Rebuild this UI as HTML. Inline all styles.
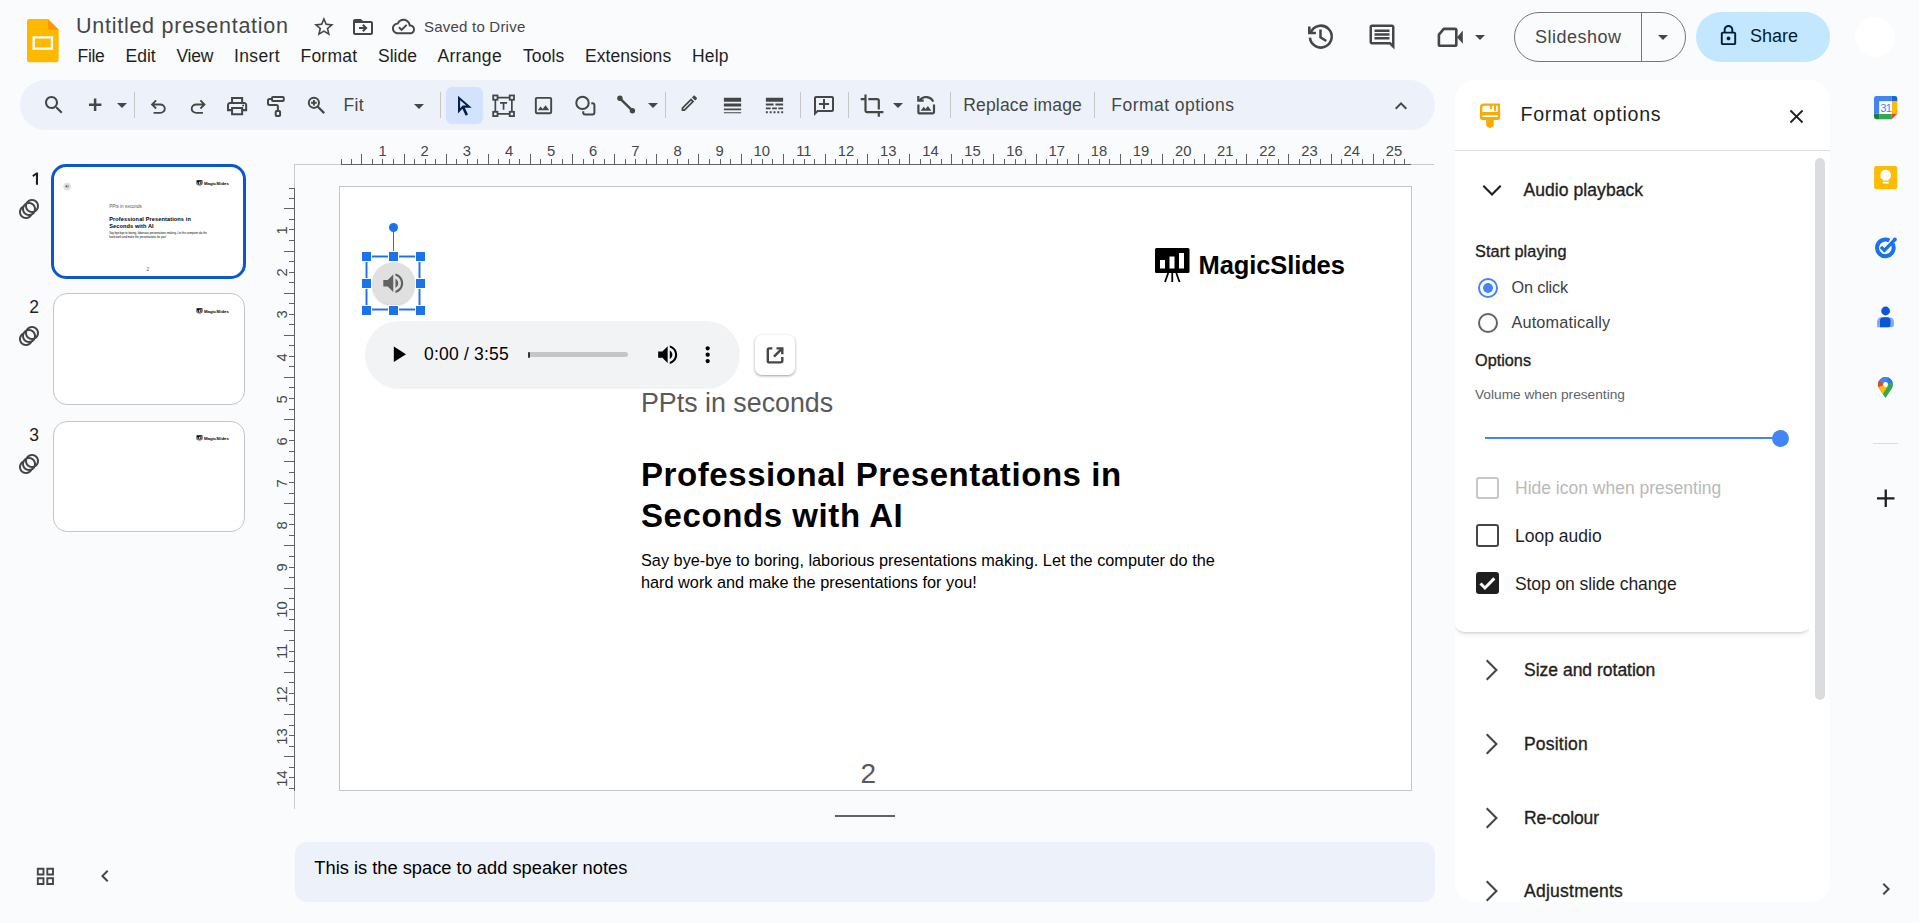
<!DOCTYPE html>
<html>
<head>
<meta charset="utf-8">
<title>Untitled presentation - Google Slides</title>
<style>
*{box-sizing:border-box;margin:0;padding:0}
html,body{width:1919px;height:923px;overflow:hidden;background:#f9fbfd;font-family:"Liberation Sans",sans-serif;color:#1f1f1f}
.a{position:absolute}
.t{position:absolute;white-space:nowrap;line-height:1}
svg{position:absolute;display:block;overflow:visible}
.ic{fill:#444746}
.nv{fill:#041e49}
#toolbar{left:20px;top:80px;width:1415px;height:50px;border-radius:25px;background:#edf2fa}
.sep{position:absolute;top:92px;width:1px;height:26px;background:#c7c7c7}
.menu{top:48.300px;font-size:17.5px;color:#1f1f1f}
#panel{left:1455px;top:80px;width:375px;height:822px;border-radius:20px;background:#fff;overflow:hidden}
#notes{left:295px;top:842px;width:1140px;height:60px;border-radius:12px;background:#edf2fa}
#slide{left:339px;top:186px;width:1073px;height:605px;background:#fff;border:1px solid #c4c7c5}
.thumb{position:absolute;background:#fff;border:1px solid #c4c7c5;border-radius:14px}
.rn{font-size:14.800px;color:#444746}
.med{-webkit-text-stroke:0.350px currentColor}
.sec{font-size:17.500px;color:#1f1f1f}
</style>
</head>
<body>
<!-- HEADER -->
<div id="header" class="a" style="left:0;top:0;width:1919px;height:76px">
<!-- slides logo -->
<svg style="left:26.900px;top:18.800px" width="31.700" height="43.200" viewBox="0 0 31.700 43.200">
<path d="M2.500 0H20.900L31.700 10.700V40.700a2.500 2.500 0 0 1-2.500 2.500H2.500a2.500 2.500 0 0 1-2.500-2.500V2.500a2.500 2.500 0 0 1 2.500-2.500z" fill="#ffb800"/>
<path d="M20.900 0L31.700 10.700H20.900z" fill="#ff9800"/>
<path d="M5.500 17.200H26.100V30.700H5.500zM7.900 19.400V28.500H23.800V19.400z" fill="#fff" fill-rule="evenodd"/>
</svg>
<div class="t" id="title" style="left:76px;top:16px;font-size:21.500px;letter-spacing:0.740px;color:#444746">Untitled presentation</div>
<svg class="ic" style="left:311.800px;top:15px" width="23.800" height="23.800" viewBox="0 0 24 24"><path d="M22 9.24l-7.19-.62L12 2 9.19 8.63 2 9.24l5.46 4.73L5.82 21 12 17.27 18.18 21l-1.63-7.03L22 9.24zM12 15.4l-3.76 2.27 1-4.28-3.32-2.88 4.38-.38L12 6.1l1.71 4.04 4.38.38-3.32 2.88 1 4.28L12 15.4z"/></svg>
<svg class="ic" style="left:351.200px;top:14.600px" width="24" height="24" viewBox="0 0 24 24"><path d="M20 6h-8l-2-2H4c-1.1 0-2 .9-2 2v12c0 1.1.9 2 2 2h16c1.1 0 2-.9 2-2V8c0-1.1-.9-2-2-2zm0 12H4V8h16v10zm-7.5-1l-1.4-1.4 1.6-1.6H8v-2h4.7l-1.6-1.6 1.4-1.4 4 4-4 4z"/></svg>
<svg class="ic" style="left:392.100px;top:15.200px" width="23" height="23" viewBox="0 0 24 24"><path d="M19.35 10.04C18.67 6.59 15.64 4 12 4 9.11 4 6.6 5.64 5.35 8.04 2.34 8.36 0 10.91 0 14c0 3.31 2.69 6 6 6h13c2.76 0 5-2.24 5-5 0-2.64-2.05-4.78-4.65-4.96zM19 18H6c-2.21 0-4-1.79-4-4 0-2.05 1.53-3.76 3.56-3.97l1.07-.11.5-.95C8.08 7.14 9.94 6 12 6c2.62 0 4.88 1.86 5.39 4.43l.3 1.5 1.53.11c1.56.1 2.78 1.41 2.78 2.96 0 1.65-1.35 3-3 3zm-9-3.82l-2.09-2.09L6.5 13.5 10 17l6.01-6.01-1.41-1.41z"/></svg>
<div class="t" id="saved" style="left:424px;top:19px;font-size:15px;letter-spacing:0.220px;color:#444746">Saved to Drive</div>
<div class="t menu" style="left:77.5px;letter-spacing:-0.3px">File</div>
<div class="t menu" style="left:125.5px;letter-spacing:0px">Edit</div>
<div class="t menu" style="left:176.5px;letter-spacing:-0.27px">View</div>
<div class="t menu" style="left:234px;letter-spacing:0.37px">Insert</div>
<div class="t menu" style="left:300.5px;letter-spacing:0.22px">Format</div>
<div class="t menu" style="left:378px;letter-spacing:0px">Slide</div>
<div class="t menu" style="left:437.5px;letter-spacing:0.31px">Arrange</div>
<div class="t menu" style="left:523px;letter-spacing:0.1px">Tools</div>
<div class="t menu" style="left:585px;letter-spacing:0.06px">Extensions</div>
<div class="t menu" style="left:692px;letter-spacing:0.18px">Help</div>
<!-- right controls -->
<svg style="left:1300px;top:16px" width="42" height="42" viewBox="1300 16 42 42"><g fill="none" stroke="#444746" stroke-width="2.600"><path d="M1310.700 32.500A10.900 10.900 0 1 1 1309.950 37.600"/><path d="M1309.300 26.500V33H1315.900"/><path d="M1320.500 29.600V37.400L1326.300 41" stroke-width="2.500"/></g></svg>
<svg class="ic" style="left:1367.300px;top:22.300px" width="30" height="30" viewBox="0 0 24 24"><path d="M21.99 4c0-1.1-.89-2-1.99-2H4c-1.1 0-2 .9-2 2v12c0 1.1.9 2 2 2h14l4 4-.01-18zM20 4v13.17L18.83 16H4V4h16zM6 12h12v2H6zm0-3h12v2H6zm0-3h12v2H6z"/></svg>
<svg style="left:1430px;top:16px" width="42" height="42" viewBox="1430 16 42 42"><path d="M1443.800 28.900H1455a1.300 1.300 0 0 1 1.300 1.300V44.500a1.300 1.300 0 0 1-1.300 1.300H1440.200a1.300 1.300 0 0 1-1.300-1.300V34.600Z" fill="none" stroke="#444746" stroke-width="2.600" stroke-linejoin="round"/><path d="M1457 37.200L1462.800 30.600V43.700Z" fill="#444746"/></svg>
<svg class="ic" style="left:1468.100px;top:24.500px" width="24" height="24" viewBox="0 0 24 24"><path d="M7 10l5 5 5-5z"/></svg>
<div class="a" style="left:1514px;top:12px;width:172px;height:50px;border:1px solid #747775;border-radius:25px"></div>
<div class="a" style="left:1641px;top:12px;width:1px;height:50px;background:#747775"></div>
<div class="t" style="left:1535px;top:27.800px;font-size:18px;letter-spacing:0.500px;color:#444746">Slideshow</div>
<svg class="ic" style="left:1651px;top:25px" width="24" height="24" viewBox="0 0 24 24"><path d="M7 10l5 5 5-5z"/></svg>
<div class="a" style="left:1696px;top:12px;width:134px;height:50px;border-radius:25px;background:#c2e7ff"></div>
<svg style="left:1716.500px;top:24px;fill:#001d35" width="23" height="23" viewBox="0 0 24 24"><path d="M18 8h-1V6c0-2.76-2.24-5-5-5S7 3.24 7 6v2H6c-1.1 0-2 .9-2 2v10c0 1.1.9 2 2 2h12c1.1 0 2-.9 2-2V10c0-1.1-.9-2-2-2zM9 6c0-1.66 1.34-3 3-3s3 1.34 3 3v2H9V6zm9 14H6V10h12v10zm-6-3c1.1 0 2-.9 2-2s-.9-2-2-2-2 .9-2 2 .9 2 2 2z"/></svg>
<div class="t" style="left:1750px;top:26.800px;font-size:18px;color:#001d35">Share</div>
<div class="a" style="left:1855px;top:17px;width:40px;height:40px;border-radius:50%;background:#fff"></div>
</div>
<!-- TOOLBAR -->
<div id="toolbar" class="a"></div>
<svg class="ic" style="left:41.5px;top:92.8px" width="24" height="24" viewBox="0 0 24 24" ><path d="M15.5 14h-.79l-.28-.27C15.41 12.59 16 11.11 16 9.5 16 5.91 13.09 3 9.5 3S3 5.91 3 9.5 5.91 16 9.5 16c1.61 0 3.09-.59 4.23-1.57l.27.28v.79l5 4.99L20.49 19l-4.99-5zm-6 0C7.01 14 5 11.99 5 9.5S7.01 5 9.5 5 14 7.01 14 9.5 11.99 14 9.5 14z"/></svg>
<svg style="left:80px;top:90px" width="30" height="30" viewBox="80 90 30 30"><path d="M89 104.800h12.400M95.100 98.500v12.500" stroke="#444746" stroke-width="2.500" fill="none"/></svg>
<svg class="ic" style="left:110.0px;top:93.2px" width="24" height="24" viewBox="0 0 24 24" ><path d="M7 10l5 5 5-5z"/></svg>
<div class="sep" style="left:134px"></div>
<svg class="ic" style="left:147.3px;top:95.8px" width="22.5" height="22.5" viewBox="0 0 24 24" ><path d="M7 19v-2h7.1q1.575 0 2.7375-1T18 13.5q0-1.5-1.1625-2.5T14.1 10H7.8l2.6 2.6L9 14 4 9l5-5 1.4 1.4L7.8 8h6.3q2.425 0 4.1625 1.575T20 13.5q0 2.35-1.7375 3.925T14.1 19H7z"/></svg>
<svg class="ic" style="left:186.9px;top:95.8px" width="22.5" height="22.5" viewBox="0 0 24 24" ><path transform="translate(24,0) scale(-1,1)" d="M7 19v-2h7.1q1.575 0 2.7375-1T18 13.5q0-1.5-1.1625-2.5T14.1 10H7.8l2.6 2.6L9 14 4 9l5-5 1.4 1.4L7.8 8h6.3q2.425 0 4.1625 1.575T20 13.5q0 2.35-1.7375 3.925T14.1 19H7z"/></svg>
<svg class="ic" style="left:225.2px;top:94.1px" width="24.2" height="24.2" viewBox="0 0 24 24" ><path d="M19 8h-1V3H6v5H5c-1.66 0-3 1.34-3 3v6h4v4h12v-4h4v-6c0-1.66-1.34-3-3-3zM8 5h8v3H8V5zm8 12v2H8v-4h8v2zm2-2v-2H6v2H4v-4c0-.55.45-1 1-1h14c.55 0 1 .45 1 1v4h-2z"/><circle cx="18" cy="11.5" r="1"/></svg>
<svg style="left:256px;top:88px" width="80" height="36" viewBox="256 88 80 36"><g fill="none" stroke="#444746" stroke-width="2" stroke-linejoin="round"><rect x="272" y="96.900" width="11.750" height="4.200" rx="1"/><path d="M272 99H269.500a1.500 1.500 0 0 0-1.500 1.500V103.400a1.500 1.500 0 0 0 1.500 1.500H276.400a1.500 1.500 0 0 1 1.500 1.500V110.500"/><rect x="275.700" y="111" width="4.400" height="5" rx="1"/></g></svg>
<svg style="left:300px;top:88px" width="36" height="36" viewBox="300 88 36 36"><g fill="none" stroke="#444746"><circle cx="313.900" cy="102.800" r="5.100" stroke-width="2"/><path d="M317.600 106.500L324.200 113.100" stroke-width="2.200"/><path d="M311.100 102.800h5.600M313.900 100v5.600" stroke-width="1.900"/></g></svg>
<div class="t" style="left:343.500px;top:97.300px;font-size:17.500px;letter-spacing:0.300px;color:#444746">Fit</div>
<svg class="ic" style="left:406.5px;top:93.5px" width="24" height="24" viewBox="0 0 24 24" ><path d="M7 10l5 5 5-5z"/></svg>
<div class="sep" style="left:440px"></div>
<div class="a" style="left:446px;top:87px;width:37px;height:37px;border-radius:6px;background:#d3e3fd"></div>
<svg style="left:440px;top:84px" width="90" height="42" viewBox="440 84 90 42"><path fill="#041e49" fill-rule="evenodd" d="M458 95.700V113.400L462.400 108.700 465.700 115.700 468 114.600 464.800 107.700H471.700ZM460.100 100.300V108.200L462.700 105.600H466.300Z"/></svg>
<svg style="left:488px;top:90px" width="32" height="32" viewBox="488 90 32 32"><g fill="none" stroke="#444746" stroke-width="1.800"><rect x="493.200" y="95.450" width="4.300" height="4.300"/><rect x="509.700" y="95.450" width="4.300" height="4.300"/><rect x="493.200" y="111.800" width="4.300" height="4.300"/><rect x="509.700" y="111.800" width="4.300" height="4.300"/><path d="M497.500 97.600h12.200M497.500 113.950h12.200M495.350 99.750v12.050M511.850 99.750v12.050" stroke-width="1.700"/></g><path fill="#444746" d="M500 102.100h7.100v1.700h-2.700v5.900h-1.700v-5.900H500z"/></svg>
<svg class="ic" style="left:532.0px;top:94.2px" width="23" height="23" viewBox="0 0 24 24" ><path d="M19 5v14H5V5h14m0-2H5c-1.1 0-2 .9-2 2v14c0 1.1.9 2 2 2h14c1.1 0 2-.9 2-2V5c0-1.1-.9-2-2-2zm-4.86 8.86l-3 3.87L9 13.14 6 17h12l-3.86-5.14z"/></svg>
<svg style="left:570px;top:90px" width="32" height="32" viewBox="570 90 32 32"><g fill="none" stroke="#444746" stroke-width="2"><circle cx="582.500" cy="102.900" r="6.200"/><path d="M591.300 103.300H592.400a2 2 0 0 1 2 2V112.400a2 2 0 0 1-2 2H585.200a2 2 0 0 1-2-2V111.200"/></g></svg>
<svg style="left:612px;top:90px" width="30" height="30" viewBox="612 90 30 30"><path d="M619.900 98.300L632.400 110.700" stroke="#444746" stroke-width="2.400" fill="none"/><circle cx="619.900" cy="98.300" r="2.700" fill="#444746"/><circle cx="632.400" cy="110.700" r="2.700" fill="#444746"/></svg>
<svg class="ic" style="left:641.0px;top:93.2px" width="24" height="24" viewBox="0 0 24 24" ><path d="M7 10l5 5 5-5z"/></svg>
<div class="sep" style="left:665px"></div>
<svg class="ic" style="left:679.4px;top:93.3px" width="20.6" height="20.6" viewBox="0 0 24 24" ><path d="M14.06 9.02l.92.92L5.92 19H5v-.92l9.06-9.06M17.66 3c-.25 0-.51.1-.7.29l-1.83 1.83 3.75 3.75 1.83-1.83c.39-.39.39-1.02 0-1.41l-2.34-2.34c-.2-.2-.45-.29-.71-.29zm-3.6 3.19L3 17.25V21h3.75L17.810 9.94l-3.75-3.75z"/></svg>
<svg class="ic" style="left:720.6px;top:94.1px" width="23" height="23" viewBox="0 0 24 24" ><path d="M3 17h18v-2H3v2zm0 3h18v-1H3v1zm0-7h18v-3H3v3zm0-9v4h18V4H3z"/></svg>
<svg class="ic" style="left:762.6px;top:94.1px" width="23" height="23" viewBox="0 0 24 24" ><path d="M3 16h5v-2H3v2zm6.500 0h5v-2h-5v2zm6.500 0h5v-2h-5v2zM3 20h2v-2H3v2zm4 0h2v-2H7v2zm4 0h2v-2h-2v2zm4 0h2v-2h-2v2zm4 0h2v-2h-2v2zM3 12h8v-2H3v2zm10 0h8v-2h-8v2zM3 4v4h18V4H3z"/></svg>
<div class="sep" style="left:800px"></div>
<svg class="ic" style="left:812.0px;top:93.5px" width="24" height="24" viewBox="0 0 24 24" ><path transform="translate(24,0) scale(-1,1)" d="M22 4c0-1.100-.9-2-2-2H4c-1.100 0-2 .9-2 2v12c0 1.100.9 2 2 2h14l4 4V4zm-2 13.170L18.830 16H4V4h16v13.170zM13 5h-2v4H7v2h4v4h2v-4h4V9h-4z"/></svg>
<div class="sep" style="left:848px"></div>
<svg style="left:856px;top:90px" width="32" height="32" viewBox="856 90 32 32"><g fill="none" stroke="#444746" stroke-width="2.200"><path d="M860.700 99.100H865.500M865.500 94.400V110.600a1.500 1.500 0 0 0 1.500 1.500H883.400M868.300 99.100H877.300a1.500 1.500 0 0 1 1.500 1.500V109.500M878.800 112.100V116.800"/></g></svg>
<svg class="ic" style="left:886.0px;top:93.2px" width="24" height="24" viewBox="0 0 24 24" ><path d="M7 10l5 5 5-5z"/></svg>
<svg style="left:910px;top:90px" width="32" height="32" viewBox="910 90 32 32"><g fill="none" stroke="#444746" stroke-width="2.200"><path d="M918.400 104.600V111.900a1.500 1.500 0 0 0 1.500 1.500H932.500a1.500 1.500 0 0 0 1.500-1.500V104.600"/><path d="M918.300 96V100.700H923.700"/><path d="M919.800 100.200A7.800 7.800 0 0 1 933.200 101.600"/></g><path fill="#444746" d="M920.600 110.800l3.200-4 1.800 2.200 2.300-2.900 3.500 4.700z"/></svg>
<div class="sep" style="left:950px"></div>
<div class="t" style="left:963.300px;top:97.200px;font-size:17.500px;letter-spacing:0.150px;color:#444746">Replace image</div>
<div class="sep" style="left:1094px"></div>
<div class="t" style="left:1111.300px;top:97.100px;font-size:17.500px;letter-spacing:0.460px;color:#444746">Format options</div>
<svg class="ic" style="left:1389.0px;top:93.5px" width="24" height="24" viewBox="0 0 24 24" ><path d="M12 8l-6 6 1.410 1.410L12 10.830l4.590 4.580L18 14z"/></svg>
<!-- FILMSTRIP -->
<div id="film" class="a" style="left:0;top:0;width:290px;height:840px">
<div class="a" style="left:51px;top:163.500px;width:195px;height:115px;border:3px solid #0b57d0;border-radius:15px;background:#fff"></div>
<div class="thumb" style="left:53px;top:293px;width:191.500px;height:111.500px"></div>
<div class="thumb" style="left:53px;top:420.500px;width:191.500px;height:111.500px"></div>
<svg style="left:28px;top:168px" width="14" height="20" viewBox="28 168 14 20"><path d="M38 172.500V184.800H35.900V175.100L33.300 176.900 32.300 175.200 36.400 172.500Z" fill="#1f1f1f"/></svg>
<svg class="ic" style="left:16.900px;top:196.9px" width="24" height="24" viewBox="0 0 24 24"><path d="M15 2c-2.710 0-5.050 1.540-6.220 3.780-1.280.670-2.340 1.720-3 3C3.540 9.950 2 12.290 2 15c0 3.870 3.130 7 7 7 2.710 0 5.050-1.540 6.220-3.780 1.280-.670 2.340-1.720 3-3C20.460 14.050 22 11.710 22 9c0-3.870-3.130-7-7-7zM9 20c-2.760 0-5-2.240-5-5 0-1.120.370-2.160 1-3 0 3.870 3.130 7 7 7-.840.630-1.880 1-3 1zm3-3c-2.760 0-5-2.240-5-5 0-1.120.370-2.160 1-3 0 3.860 3.130 6.990 7 7-.840.630-1.880 1-3 1zm4.700-3.300c-.530.190-1.100.300-1.700.300-2.760 0-5-2.240-5-5 0-.600.110-1.170.300-1.700.530-.190 1.100-.300 1.700-.300 2.760 0 5 2.240 5 5 0 .600-.110 1.170-.300 1.700zM19 12c0-3.860-3.130-6.990-7-7 .840-.630 1.870-1 3-1 2.760 0 5 2.240 5 5 0 1.120-.370 2.160-1 3z"/></svg>
<div class="t" style="left:19px;top:298.700px;width:20px;text-align:right;font-size:17.500px;color:#1f1f1f">2</div>
<svg class="ic" style="left:16.900px;top:323.9px" width="24" height="24" viewBox="0 0 24 24"><path d="M15 2c-2.710 0-5.050 1.540-6.220 3.780-1.280.670-2.340 1.720-3 3C3.540 9.950 2 12.290 2 15c0 3.870 3.130 7 7 7 2.710 0 5.050-1.540 6.220-3.780 1.280-.670 2.340-1.720 3-3C20.460 14.050 22 11.710 22 9c0-3.870-3.130-7-7-7zM9 20c-2.760 0-5-2.240-5-5 0-1.120.370-2.160 1-3 0 3.870 3.130 7 7 7-.840.630-1.880 1-3 1zm3-3c-2.760 0-5-2.240-5-5 0-1.120.370-2.160 1-3 0 3.860 3.130 6.990 7 7-.840.630-1.880 1-3 1zm4.700-3.300c-.530.190-1.100.300-1.700.300-2.760 0-5-2.240-5-5 0-.600.110-1.170.300-1.700.530-.190 1.100-.300 1.700-.300 2.760 0 5 2.240 5 5 0 .600-.110 1.170-.300 1.700zM19 12c0-3.860-3.130-6.990-7-7 .840-.630 1.870-1 3-1 2.760 0 5 2.240 5 5 0 1.120-.370 2.160-1 3z"/></svg>
<div class="t" style="left:19px;top:426.500px;width:20px;text-align:right;font-size:17.500px;color:#1f1f1f">3</div>
<svg class="ic" style="left:16.900px;top:451.9px" width="24" height="24" viewBox="0 0 24 24"><path d="M15 2c-2.710 0-5.050 1.540-6.220 3.780-1.280.670-2.340 1.720-3 3C3.540 9.950 2 12.290 2 15c0 3.870 3.130 7 7 7 2.710 0 5.050-1.540 6.220-3.780 1.280-.670 2.340-1.720 3-3C20.460 14.050 22 11.710 22 9c0-3.870-3.130-7-7-7zM9 20c-2.760 0-5-2.240-5-5 0-1.120.370-2.160 1-3 0 3.870 3.130 7 7 7-.840.630-1.880 1-3 1zm3-3c-2.760 0-5-2.240-5-5 0-1.120.370-2.160 1-3 0 3.860 3.130 6.990 7 7-.840.630-1.880 1-3 1zm4.700-3.300c-.530.190-1.100.300-1.700.300-2.760 0-5-2.240-5-5 0-.600.110-1.170.300-1.700.530-.190 1.100-.300 1.700-.300 2.760 0 5 2.240 5 5 0 .600-.110 1.170-.300 1.700zM19 12c0-3.860-3.130-6.990-7-7 .840-.630 1.870-1 3-1 2.760 0 5 2.240 5 5 0 1.120-.370 2.160-1 3z"/></svg>
<div class="a" style="left:57.700px;top:170px;width:1071px;height:603px;transform:scale(0.17);transform-origin:0 0"><svg style="left:814.5px;top:60.5px" width="34.5" height="34.5" viewBox="0 0 34.5 34.5"><rect x="0" y="0" width="34.500" height="25" rx="1.500" fill="#000"/><rect x="5" y="12" width="5" height="8.500" fill="#fff"/><rect x="14.500" y="8.500" width="5" height="12" fill="#fff"/><rect x="24" y="5" width="5" height="15.500" fill="#fff"/><path d="M13.200 25L10 34M17.250 25v9M21.300 25L24.500 34" stroke="#000" stroke-width="1.800" fill="none"/></svg><div class="t" style="left:858.500px;top:66px;font-size:25.500px;font-weight:bold;color:#000;letter-spacing:-0.100px">MagicSlides</div><div class="t" style="left:301px;top:202.800px;font-size:26.800px;color:#595959">PPts in seconds</div><div class="t" style="left:301px;top:266.800px;font-size:33px;letter-spacing:0.580px;font-weight:bold;color:#000;line-height:41.600px">Professional Presentations in<br>Seconds with AI</div><div class="t" style="left:301px;top:361.500px;font-size:16.300px;color:#000;line-height:22.6px">Say bye-bye to boring, laborious presentations making. Let the computer do the<br>hard work and make the presentations for you!</div><div class="t" style="left:520.5px;top:573.3px;font-size:28px;color:#595959">2</div><div class="a" style="left:32px;top:75px;width:43px;height:43px;border-radius:50%;background:#e0e0e0;box-shadow:0 1.500px 2px rgba(0,0,0,.18)"></div><svg style="left:40.200px;top:83.200px;fill:#616161" width="26.500" height="26.500" viewBox="0 0 24 24"><path d="M3 9v6h4l5 5V4L7 9H3zm13.500 3c0-1.770-1.020-3.290-2.500-4.030v8.050c1.480-.730 2.500-2.250 2.500-4.020zM14 3.230v2.060c2.890.860 5 3.540 5 6.710s-2.110 5.850-5 6.710v2.060c4.010-.910 7-4.490 7-8.770s-2.990-7.860-7-8.770z"/></svg></div>
<div class="a" style="left:57.700px;top:297.700px;width:1071px;height:603px;transform:scale(0.17);transform-origin:0 0"><svg style="left:814.5px;top:60.5px" width="34.5" height="34.5" viewBox="0 0 34.5 34.5"><rect x="0" y="0" width="34.500" height="25" rx="1.500" fill="#000"/><rect x="5" y="12" width="5" height="8.500" fill="#fff"/><rect x="14.500" y="8.500" width="5" height="12" fill="#fff"/><rect x="24" y="5" width="5" height="15.500" fill="#fff"/><path d="M13.200 25L10 34M17.250 25v9M21.300 25L24.500 34" stroke="#000" stroke-width="1.800" fill="none"/></svg><div class="t" style="left:858.500px;top:66px;font-size:25.500px;font-weight:bold;color:#000;letter-spacing:-0.100px">MagicSlides</div></div>
<div class="a" style="left:57.700px;top:425.100px;width:1071px;height:603px;transform:scale(0.17);transform-origin:0 0"><svg style="left:814.5px;top:60.5px" width="34.5" height="34.5" viewBox="0 0 34.5 34.5"><rect x="0" y="0" width="34.500" height="25" rx="1.500" fill="#000"/><rect x="5" y="12" width="5" height="8.500" fill="#fff"/><rect x="14.500" y="8.500" width="5" height="12" fill="#fff"/><rect x="24" y="5" width="5" height="15.500" fill="#fff"/><path d="M13.200 25L10 34M17.250 25v9M21.300 25L24.500 34" stroke="#000" stroke-width="1.800" fill="none"/></svg><div class="t" style="left:858.500px;top:66px;font-size:25.500px;font-weight:bold;color:#000;letter-spacing:-0.100px">MagicSlides</div></div>
</div>
<!-- RULERS -->
<div class="a" style="left:294px;top:164px;width:1140px;height:1px;background:#c9cbcd"></div>
<div class="a" style="left:341px;top:164px;width:1070px;height:1px;background:#5f6368"></div>
<div class="a" style="left:294px;top:164px;width:1px;height:645px;background:#c9cbcd"></div>
<div class="a" style="left:294px;top:188px;width:1px;height:603px;background:#5f6368"></div>
<svg style="left:0;top:0;fill:#5f6368" width="1919" height="923" viewBox="0 0 1919 923" shape-rendering="crispEdges"><rect x="341" y="159" width="1" height="5"/><rect x="351" y="159" width="1" height="5"/><rect x="361" y="154" width="1" height="10"/><rect x="372" y="159" width="1" height="5"/><rect x="382" y="159" width="1" height="5"/><rect x="393" y="159" width="1" height="5"/><rect x="404" y="154" width="1" height="10"/><rect x="414" y="159" width="1" height="5"/><rect x="425" y="159" width="1" height="5"/><rect x="435" y="159" width="1" height="5"/><rect x="446" y="154" width="1" height="10"/><rect x="456" y="159" width="1" height="5"/><rect x="467" y="159" width="1" height="5"/><rect x="477" y="159" width="1" height="5"/><rect x="488" y="154" width="1" height="10"/><rect x="498" y="159" width="1" height="5"/><rect x="509" y="159" width="1" height="5"/><rect x="519" y="159" width="1" height="5"/><rect x="530" y="154" width="1" height="10"/><rect x="540" y="159" width="1" height="5"/><rect x="551" y="159" width="1" height="5"/><rect x="562" y="159" width="1" height="5"/><rect x="572" y="154" width="1" height="10"/><rect x="583" y="159" width="1" height="5"/><rect x="593" y="159" width="1" height="5"/><rect x="604" y="159" width="1" height="5"/><rect x="614" y="154" width="1" height="10"/><rect x="625" y="159" width="1" height="5"/><rect x="635" y="159" width="1" height="5"/><rect x="646" y="159" width="1" height="5"/><rect x="656" y="154" width="1" height="10"/><rect x="667" y="159" width="1" height="5"/><rect x="677" y="159" width="1" height="5"/><rect x="688" y="159" width="1" height="5"/><rect x="698" y="154" width="1" height="10"/><rect x="709" y="159" width="1" height="5"/><rect x="720" y="159" width="1" height="5"/><rect x="730" y="159" width="1" height="5"/><rect x="741" y="154" width="1" height="10"/><rect x="751" y="159" width="1" height="5"/><rect x="762" y="159" width="1" height="5"/><rect x="772" y="159" width="1" height="5"/><rect x="783" y="154" width="1" height="10"/><rect x="793" y="159" width="1" height="5"/><rect x="804" y="159" width="1" height="5"/><rect x="814" y="159" width="1" height="5"/><rect x="825" y="154" width="1" height="10"/><rect x="835" y="159" width="1" height="5"/><rect x="846" y="159" width="1" height="5"/><rect x="857" y="159" width="1" height="5"/><rect x="867" y="154" width="1" height="10"/><rect x="878" y="159" width="1" height="5"/><rect x="888" y="159" width="1" height="5"/><rect x="899" y="159" width="1" height="5"/><rect x="909" y="154" width="1" height="10"/><rect x="920" y="159" width="1" height="5"/><rect x="930" y="159" width="1" height="5"/><rect x="941" y="159" width="1" height="5"/><rect x="951" y="154" width="1" height="10"/><rect x="962" y="159" width="1" height="5"/><rect x="972" y="159" width="1" height="5"/><rect x="983" y="159" width="1" height="5"/><rect x="993" y="154" width="1" height="10"/><rect x="1004" y="159" width="1" height="5"/><rect x="1015" y="159" width="1" height="5"/><rect x="1025" y="159" width="1" height="5"/><rect x="1036" y="154" width="1" height="10"/><rect x="1046" y="159" width="1" height="5"/><rect x="1057" y="159" width="1" height="5"/><rect x="1067" y="159" width="1" height="5"/><rect x="1078" y="154" width="1" height="10"/><rect x="1088" y="159" width="1" height="5"/><rect x="1099" y="159" width="1" height="5"/><rect x="1109" y="159" width="1" height="5"/><rect x="1120" y="154" width="1" height="10"/><rect x="1130" y="159" width="1" height="5"/><rect x="1141" y="159" width="1" height="5"/><rect x="1151" y="159" width="1" height="5"/><rect x="1162" y="154" width="1" height="10"/><rect x="1173" y="159" width="1" height="5"/><rect x="1183" y="159" width="1" height="5"/><rect x="1194" y="159" width="1" height="5"/><rect x="1204" y="154" width="1" height="10"/><rect x="1215" y="159" width="1" height="5"/><rect x="1225" y="159" width="1" height="5"/><rect x="1236" y="159" width="1" height="5"/><rect x="1246" y="154" width="1" height="10"/><rect x="1257" y="159" width="1" height="5"/><rect x="1267" y="159" width="1" height="5"/><rect x="1278" y="159" width="1" height="5"/><rect x="1288" y="154" width="1" height="10"/><rect x="1299" y="159" width="1" height="5"/><rect x="1310" y="159" width="1" height="5"/><rect x="1320" y="159" width="1" height="5"/><rect x="1331" y="154" width="1" height="10"/><rect x="1341" y="159" width="1" height="5"/><rect x="1352" y="159" width="1" height="5"/><rect x="1362" y="159" width="1" height="5"/><rect x="1373" y="154" width="1" height="10"/><rect x="1383" y="159" width="1" height="5"/><rect x="1394" y="159" width="1" height="5"/><rect x="1404" y="159" width="1" height="5"/><rect x="289" y="188" width="5" height="1"/><rect x="289" y="198" width="5" height="1"/><rect x="284" y="208" width="10" height="1"/><rect x="289" y="219" width="5" height="1"/><rect x="289" y="229" width="5" height="1"/><rect x="289" y="240" width="5" height="1"/><rect x="284" y="251" width="10" height="1"/><rect x="289" y="261" width="5" height="1"/><rect x="289" y="272" width="5" height="1"/><rect x="289" y="282" width="5" height="1"/><rect x="284" y="293" width="10" height="1"/><rect x="289" y="303" width="5" height="1"/><rect x="289" y="314" width="5" height="1"/><rect x="289" y="324" width="5" height="1"/><rect x="284" y="335" width="10" height="1"/><rect x="289" y="345" width="5" height="1"/><rect x="289" y="356" width="5" height="1"/><rect x="289" y="366" width="5" height="1"/><rect x="284" y="377" width="10" height="1"/><rect x="289" y="387" width="5" height="1"/><rect x="289" y="398" width="5" height="1"/><rect x="289" y="409" width="5" height="1"/><rect x="284" y="419" width="10" height="1"/><rect x="289" y="430" width="5" height="1"/><rect x="289" y="440" width="5" height="1"/><rect x="289" y="451" width="5" height="1"/><rect x="284" y="461" width="10" height="1"/><rect x="289" y="472" width="5" height="1"/><rect x="289" y="482" width="5" height="1"/><rect x="289" y="493" width="5" height="1"/><rect x="284" y="503" width="10" height="1"/><rect x="289" y="514" width="5" height="1"/><rect x="289" y="524" width="5" height="1"/><rect x="289" y="535" width="5" height="1"/><rect x="284" y="545" width="10" height="1"/><rect x="289" y="556" width="5" height="1"/><rect x="289" y="567" width="5" height="1"/><rect x="289" y="577" width="5" height="1"/><rect x="284" y="588" width="10" height="1"/><rect x="289" y="598" width="5" height="1"/><rect x="289" y="609" width="5" height="1"/><rect x="289" y="619" width="5" height="1"/><rect x="284" y="630" width="10" height="1"/><rect x="289" y="640" width="5" height="1"/><rect x="289" y="651" width="5" height="1"/><rect x="289" y="661" width="5" height="1"/><rect x="284" y="672" width="10" height="1"/><rect x="289" y="682" width="5" height="1"/><rect x="289" y="693" width="5" height="1"/><rect x="289" y="704" width="5" height="1"/><rect x="284" y="714" width="10" height="1"/><rect x="289" y="725" width="5" height="1"/><rect x="289" y="735" width="5" height="1"/><rect x="289" y="746" width="5" height="1"/><rect x="284" y="756" width="10" height="1"/><rect x="289" y="767" width="5" height="1"/><rect x="289" y="777" width="5" height="1"/><rect x="289" y="788" width="5" height="1"/></svg>
<div class="t rn" style="left:362.5px;top:144.300px;width:40px;text-align:center">1</div>
<div class="t rn" style="left:404.7px;top:144.300px;width:40px;text-align:center">2</div>
<div class="t rn" style="left:446.8px;top:144.300px;width:40px;text-align:center">3</div>
<div class="t rn" style="left:489.0px;top:144.300px;width:40px;text-align:center">4</div>
<div class="t rn" style="left:531.1px;top:144.300px;width:40px;text-align:center">5</div>
<div class="t rn" style="left:573.2px;top:144.300px;width:40px;text-align:center">6</div>
<div class="t rn" style="left:615.4px;top:144.300px;width:40px;text-align:center">7</div>
<div class="t rn" style="left:657.5px;top:144.300px;width:40px;text-align:center">8</div>
<div class="t rn" style="left:699.7px;top:144.300px;width:40px;text-align:center">9</div>
<div class="t rn" style="left:741.8px;top:144.300px;width:40px;text-align:center">10</div>
<div class="t rn" style="left:783.9px;top:144.300px;width:40px;text-align:center">11</div>
<div class="t rn" style="left:826.1px;top:144.300px;width:40px;text-align:center">12</div>
<div class="t rn" style="left:868.2px;top:144.300px;width:40px;text-align:center">13</div>
<div class="t rn" style="left:910.4px;top:144.300px;width:40px;text-align:center">14</div>
<div class="t rn" style="left:952.5px;top:144.300px;width:40px;text-align:center">15</div>
<div class="t rn" style="left:994.6px;top:144.300px;width:40px;text-align:center">16</div>
<div class="t rn" style="left:1036.8px;top:144.300px;width:40px;text-align:center">17</div>
<div class="t rn" style="left:1078.9px;top:144.300px;width:40px;text-align:center">18</div>
<div class="t rn" style="left:1121.1px;top:144.300px;width:40px;text-align:center">19</div>
<div class="t rn" style="left:1163.2px;top:144.300px;width:40px;text-align:center">20</div>
<div class="t rn" style="left:1205.3px;top:144.300px;width:40px;text-align:center">21</div>
<div class="t rn" style="left:1247.5px;top:144.300px;width:40px;text-align:center">22</div>
<div class="t rn" style="left:1289.6px;top:144.300px;width:40px;text-align:center">23</div>
<div class="t rn" style="left:1331.8px;top:144.300px;width:40px;text-align:center">24</div>
<div class="t rn" style="left:1373.9px;top:144.300px;width:40px;text-align:center">25</div>
<div class="t rn" style="left:262.2px;top:223.0px;width:40px;text-align:center;transform:rotate(-90deg)">1</div>
<div class="t rn" style="left:262.2px;top:265.2px;width:40px;text-align:center;transform:rotate(-90deg)">2</div>
<div class="t rn" style="left:262.2px;top:307.3px;width:40px;text-align:center;transform:rotate(-90deg)">3</div>
<div class="t rn" style="left:262.2px;top:349.5px;width:40px;text-align:center;transform:rotate(-90deg)">4</div>
<div class="t rn" style="left:262.2px;top:391.6px;width:40px;text-align:center;transform:rotate(-90deg)">5</div>
<div class="t rn" style="left:262.2px;top:433.7px;width:40px;text-align:center;transform:rotate(-90deg)">6</div>
<div class="t rn" style="left:262.2px;top:475.9px;width:40px;text-align:center;transform:rotate(-90deg)">7</div>
<div class="t rn" style="left:262.2px;top:518.0px;width:40px;text-align:center;transform:rotate(-90deg)">8</div>
<div class="t rn" style="left:262.2px;top:560.2px;width:40px;text-align:center;transform:rotate(-90deg)">9</div>
<div class="t rn" style="left:262.2px;top:602.3px;width:40px;text-align:center;transform:rotate(-90deg)">10</div>
<div class="t rn" style="left:262.2px;top:644.4px;width:40px;text-align:center;transform:rotate(-90deg)">11</div>
<div class="t rn" style="left:262.2px;top:686.6px;width:40px;text-align:center;transform:rotate(-90deg)">12</div>
<div class="t rn" style="left:262.2px;top:728.7px;width:40px;text-align:center;transform:rotate(-90deg)">13</div>
<div class="t rn" style="left:262.2px;top:770.9px;width:40px;text-align:center;transform:rotate(-90deg)">14</div>
<!-- CANVAS -->
<div id="slide" class="a"><div class="a" style="left:0;top:0;width:1071px;height:603px"><svg style="left:814.5px;top:60.5px" width="34.5" height="34.5" viewBox="0 0 34.5 34.5"><rect x="0" y="0" width="34.500" height="25" rx="1.500" fill="#000"/><rect x="5" y="12" width="5" height="8.500" fill="#fff"/><rect x="14.500" y="8.500" width="5" height="12" fill="#fff"/><rect x="24" y="5" width="5" height="15.500" fill="#fff"/><path d="M13.200 25L10 34M17.250 25v9M21.300 25L24.500 34" stroke="#000" stroke-width="1.800" fill="none"/></svg><div class="t" style="left:858.500px;top:66px;font-size:25.500px;font-weight:bold;color:#000;letter-spacing:-0.100px">MagicSlides</div><div class="t" style="left:301px;top:202.800px;font-size:26.800px;color:#595959">PPts in seconds</div><div class="t" style="left:301px;top:266.800px;font-size:33px;letter-spacing:0.580px;font-weight:bold;color:#000;line-height:41.600px">Professional Presentations in<br>Seconds with AI</div><div class="t" style="left:301px;top:361.500px;font-size:16.300px;color:#000;line-height:22.6px">Say bye-bye to boring, laborious presentations making. Let the computer do the<br>hard work and make the presentations for you!</div><div class="t" style="left:520.5px;top:573.3px;font-size:28px;color:#595959">2</div><div class="a" style="left:32px;top:75px;width:43px;height:43px;border-radius:50%;background:#e0e0e0;box-shadow:0 1.500px 2px rgba(0,0,0,.18)"></div><svg style="left:40.200px;top:83.200px;fill:#616161" width="26.500" height="26.500" viewBox="0 0 24 24"><path d="M3 9v6h4l5 5V4L7 9H3zm13.500 3c0-1.770-1.020-3.290-2.500-4.030v8.050c1.480-.730 2.500-2.250 2.500-4.020zM14 3.230v2.060c2.890.860 5 3.540 5 6.710s-2.110 5.850-5 6.710v2.060c4.010-.910 7-4.490 7-8.770s-2.990-7.860-7-8.770z"/></svg>
<!-- selection -->
<div class="a" style="left:26.400px;top:69.400px;width:54px;height:54px;border:1px solid #1a73e8;box-shadow:0 0 0 1px rgba(138,180,248,.9),inset 0 0 0 1px rgba(138,180,248,.9)"></div>
<div class="a" style="left:52.900px;top:44px;width:1px;height:26px;background:#1a73e8"></div>
<div class="a" style="left:48.900px;top:35.500px;width:9px;height:9px;border-radius:50%;background:#1a73e8"></div>
<div class="a" style="left:21.9px;top:64.9px;width:9px;height:9px;background:#1a73e8;outline:1px solid #fff"></div><div class="a" style="left:48.9px;top:64.9px;width:9px;height:9px;background:#1a73e8;outline:1px solid #fff"></div><div class="a" style="left:75.9px;top:64.9px;width:9px;height:9px;background:#1a73e8;outline:1px solid #fff"></div><div class="a" style="left:21.9px;top:91.9px;width:9px;height:9px;background:#1a73e8;outline:1px solid #fff"></div><div class="a" style="left:75.9px;top:91.9px;width:9px;height:9px;background:#1a73e8;outline:1px solid #fff"></div><div class="a" style="left:21.9px;top:118.9px;width:9px;height:9px;background:#1a73e8;outline:1px solid #fff"></div><div class="a" style="left:48.9px;top:118.9px;width:9px;height:9px;background:#1a73e8;outline:1px solid #fff"></div><div class="a" style="left:75.9px;top:118.9px;width:9px;height:9px;background:#1a73e8;outline:1px solid #fff"></div>
<!-- audio player -->
<div class="a" style="left:25px;top:134px;width:375px;height:67.500px;border-radius:34px;background:#f1f3f4"></div>
<svg style="left:45px;top:154.300px;fill:#000" width="26.500" height="26.500" viewBox="0 0 24 24"><path d="M8 5v14l11-7z"/></svg>
<div class="t" style="left:84px;top:159.200px;font-size:17.500px;color:#000;letter-spacing:0.200px">0:00 / 3:55</div>
<div class="a" style="left:188px;top:165px;width:100px;height:5px;border-radius:2.500px;background:#c6c6c6"></div>
<div class="a" style="left:188px;top:164.500px;width:2px;height:6px;border-radius:1px;background:#333"></div>
<svg style="left:314.600px;top:154.900px;fill:#000" width="25.300" height="25.300" viewBox="0 0 24 24"><path d="M3 9v6h4l5 5V4L7 9H3zm13.500 3c0-1.770-1.020-3.290-2.500-4.030v8.050c1.480-.730 2.500-2.250 2.500-4.020zM14 3.230v2.060c2.890.860 5 3.540 5 6.710s-2.110 5.850-5 6.710v2.060c4.010-.910 7-4.490 7-8.770s-2.990-7.860-7-8.770z"/></svg>
<svg style="left:354.600px;top:154.700px;fill:#000" width="25.400" height="25.400" viewBox="0 0 24 24"><path d="M12 8c1.100 0 2-.9 2-2s-.9-2-2-2-2 .9-2 2 .9 2 2 2zm0 2c-1.100 0-2 .9-2 2s.9 2 2 2 2-.9 2-2-.9-2-2-2zm0 6c-1.100 0-2 .9-2 2s.9 2 2 2 2-.9 2-2-.9-2-2-2z"/></svg>
<div class="a" style="left:415px;top:148px;width:40px;height:40px;border-radius:7px;background:#fff;box-shadow:0 1px 3px rgba(60,64,67,.35),0 1px 2px rgba(60,64,67,.2)"></div>
<svg style="left:420px;top:153px" width="30" height="30" viewBox="760 340 30 30"><g stroke="#444746" stroke-width="2.400" fill="none"><path d="M772.300 348.400H769.300a1.500 1.500 0 0 0-1.500 1.500V360.900a1.500 1.500 0 0 0 1.500 1.500H780.800a1.500 1.500 0 0 0 1.500-1.500V357"/><path d="M776.500 348.400H782.300V354.200"/><path d="M782 348.700L774 356.700"/></g></svg>
</div></div>
<!-- NOTES -->
<div class="a" style="left:835px;top:815px;width:60px;height:2px;background:#5f6368"></div>
<div id="notes" class="a"></div>
<div class="t" style="left:314.300px;top:859.300px;font-size:18.300px;color:#000">This is the space to add speaker notes</div>
<svg class="ic" style="left:34px;top:864.900px" width="22.800" height="22.800" viewBox="0 0 24 24"><path d="M3 3v8h8V3H3zm6 6H5V5h4v4zm-6 4v8h8v-8H3zm6 6H5v-4h4v4zm4-16v8h8V3h-8zm6 6h-4V5h4v4zm-6 4v8h8v-8h-8zm6 6h-4v-4h4v4z"/></svg>
<svg class="ic" style="left:93.200px;top:863.900px" width="24" height="24" viewBox="0 0 24 24"><path d="M15.410 7.410L14 6l-6 6 6 6 1.410-1.410L10.830 12z"/></svg>
<!-- PANEL -->
<div id="panel" class="a">
<svg style="left:15px;top:15px" width="40" height="40" viewBox="1470 95 40 40"><path fill="#f9ab00" fill-rule="evenodd" d="M1483.500 103.450H1500.100V117.600a2.500 2.500 0 0 1-2.500 2.500H1482.500a2.500 2.500 0 0 1-2.500-2.500V106.950a3.500 3.500 0 0 1 3.500-3.500ZM1484.300 105.800H1490.100V108.900H1492.100V105.800H1494V110.800H1496V105.800H1497.800V112.100H1482.300V107.800a2 2 0 0 1 2-2ZM1482.300 115.150H1497.800V117.100H1482.300Z"/><path fill="#f9ab00" d="M1486.200 120H1493.800V124.100a3.800 3.800 0 0 1-7.600 0Z"/></svg>
<div class="t" style="left:65.500px;top:25.200px;font-size:19.600px;letter-spacing:0.730px;color:#1f1f1f">Format options</div>
<svg style="left:329.500px;top:24.500px;fill:#1f1f1f" width="23" height="23" viewBox="0 0 24 24"><path d="M19 6.410L17.590 5 12 10.590 6.410 5 5 6.410 10.590 12 5 17.590 6.410 19 12 13.410 17.590 19 19 17.590 13.410 12z"/></svg>
<div class="a" style="left:0;top:70px;width:375px;height:1px;background:#dadce0"></div>
<div class="a" style="left:0;top:71px;width:355px;height:481px;background:#fff;border-radius:0 0 9px 9px;box-shadow:0 3px 4px -2px rgba(60,64,67,.26),0 1px 2px -1px rgba(60,64,67,.12);clip-path:inset(0 1px -10px 0)"></div>
<div class="a" style="left:360px;top:78px;width:10px;height:542px;border-radius:5px;background:#dadce0"></div>
<svg style="left:20px;top:95px" width="34" height="30" viewBox="1475 175 34 30"><path d="M1483.300 185.800L1492 194.600 1500.700 185.800" fill="none" stroke="#1f1f1f" stroke-width="2.100"/></svg>
<div class="t sec med" style="left:68.500px;top:102.200px;letter-spacing:0.070px">Audio playback</div>
<div class="t med" style="left:20px;top:163px;font-size:16.250px;letter-spacing:0.100px;color:#1f1f1f">Start playing</div>
<div class="a" style="left:23px;top:198px;width:20px;height:20px;border-radius:50%;border:2px solid #4285f4"></div>
<div class="a" style="left:27.700px;top:202.700px;width:10.600px;height:10.600px;border-radius:50%;background:#4285f4"></div>
<div class="t" style="left:56.500px;top:199px;font-size:16.250px;letter-spacing:-0.170px;color:#3c4043">On click</div>
<div class="a" style="left:23px;top:232.800px;width:20px;height:20px;border-radius:50%;border:2px solid #5f6368"></div>
<div class="t" style="left:56.500px;top:234px;font-size:16.250px;letter-spacing:0.160px;color:#3c4043">Automatically</div>
<div class="t med" style="left:20px;top:272.300px;font-size:16.250px;color:#1f1f1f">Options</div>
<div class="t" style="left:20px;top:307.600px;font-size:13.700px;color:#5f6368">Volume when presenting</div>
<div class="a" style="left:30px;top:356.500px;width:296px;height:2.500px;background:#4285f4"></div>
<div class="a" style="left:317px;top:349.500px;width:17px;height:17px;border-radius:50%;background:#4285f4"></div>
<div class="a" style="left:21px;top:396.800px;width:22.500px;height:22.500px;border:2px solid #c8c8c8;border-radius:3px"></div>
<div class="t" style="left:60px;top:400.400px;font-size:17.500px;color:#b9b9b9">Hide icon when presenting</div>
<div class="a" style="left:21px;top:444px;width:22.500px;height:22.500px;border:2px solid #444746;border-radius:3px"></div>
<div class="t" style="left:60px;top:448.400px;font-size:17.500px;color:#1f1f1f">Loop audio</div>
<div class="a" style="left:21px;top:491.800px;width:22.500px;height:22.500px;background:#1f1f1f;border-radius:3px"></div>
<svg style="left:21px;top:491.800px" width="22.500" height="22.500" viewBox="0 0 24 24"><path d="M4.800 12.300l4.700 4.700L19.600 6.800" fill="none" stroke="#fff" stroke-width="3.200"/></svg>
<div class="t" style="left:60px;top:495.500px;font-size:17.500px;letter-spacing:-0.090px;color:#1f1f1f">Stop on slide change</div>
<svg style="left:20px;top:575.0px" width="30" height="30" viewBox="0 0 30 30"><path d="M11.700 5.300L21.400 15 11.700 24.700" fill="none" stroke="#444746" stroke-width="2.100"/></svg>
<div class="t sec med" style="left:69px;top:582.0px">Size and rotation</div>
<svg style="left:20px;top:648.5px" width="30" height="30" viewBox="0 0 30 30"><path d="M11.700 5.300L21.400 15 11.700 24.700" fill="none" stroke="#444746" stroke-width="2.100"/></svg>
<div class="t sec med" style="left:69px;top:655.5px;letter-spacing:0.2px">Position</div>
<svg style="left:20px;top:722.7px" width="30" height="30" viewBox="0 0 30 30"><path d="M11.700 5.300L21.400 15 11.700 24.700" fill="none" stroke="#444746" stroke-width="2.100"/></svg>
<div class="t sec med" style="left:69px;top:729.7px;letter-spacing:-0.1px">Re-colour</div>
<svg style="left:20px;top:796.2px" width="30" height="30" viewBox="0 0 30 30"><path d="M11.700 5.300L21.400 15 11.700 24.700" fill="none" stroke="#444746" stroke-width="2.100"/></svg>
<div class="t sec med" style="left:69px;top:803.2px;letter-spacing:0.25px">Adjustments</div>
</div>
<!-- SIDEBAR -->
<div id="side" class="a" style="left:0;top:0;width:1919px;height:923px;pointer-events:none">
<svg style="left:1873.700px;top:95.500px" width="23.300" height="23.300" viewBox="0 0 24 24">
<path d="M2.500 0H18.300V5.700H5.700V18.300H0V2.500A2.500 2.500 0 0 1 2.500 0z" fill="#4285f4"/>
<path d="M18.300 0H21.500A2.500 2.500 0 0 1 24 2.500V5.700H18.300z" fill="#1967d2"/>
<path d="M18.300 5.700H24V18.300H18.300z" fill="#fbbc04"/>
<path d="M5.700 18.300H18.300V24H5.700z" fill="#34a853"/>
<path d="M0 18.300H5.700V24H2.500A2.500 2.500 0 0 1 0 21.500z" fill="#188038"/>
<path d="M18.300 18.300H24L18.300 24z" fill="#ea4335"/>
<rect x="5.500" y="5.500" width="13" height="13" fill="#fff"/>
<text x="12.100" y="16.200" font-family="Liberation Sans, sans-serif" font-size="11.500" fill="#4285f4" text-anchor="middle" letter-spacing="-0.700">31</text>
</svg>
<svg style="left:1873.700px;top:166px" width="23.400" height="23.200" viewBox="0 0 24 24"><rect width="24" height="24" rx="2.200" fill="#fbbc04"/><path d="M12 4a5.500 5.500 0 0 0-3 10.100V15h6v-.9A5.500 5.500 0 0 0 12 4zM9 16.200h6v1.900H9z" fill="#fff"/></svg>
<svg style="left:1870px;top:232px" width="32" height="32" viewBox="1870 232 32 32"><g fill="none" stroke="#1a73e8"><path d="M1892.600 243.800A8.300 8.300 0 1 1 1889.400 240.600" stroke-width="4"/><path d="M1880.900 246.900L1884.400 250.400 1894.600 239.900" stroke-width="3.400"/></g><circle cx="1894.800" cy="239.600" r="2" fill="#1a73e8"/></svg>
<svg style="left:1870px;top:300px" width="32" height="32" viewBox="1870 300 32 32"><circle cx="1885.600" cy="311" r="4.400" fill="#0b57d0"/><path d="M1877.100 327.200V321.700a4.500 4.500 0 0 1 4.500-4.500H1889.400a4.500 4.500 0 0 1 4.500 4.500V324.700a2.500 2.500 0 0 1-2.500 2.500z" fill="#82a9f8"/><path d="M1880 327.200V320.700a3.500 3.500 0 0 1 3.500-3.500H1887a3.500 3.500 0 0 1 3.500 3.500V324.700a2.500 2.500 0 0 1-2.500 2.500z" fill="#0b57d0"/></svg>
<svg style="left:1870px;top:370px" width="32" height="32" viewBox="1870 370 32 32"><defs><clipPath id="pin"><path d="M1885.500 377a7.500 7.500 0 0 0-7.500 7.500c0 2 .8 3.600 1.800 5L1885.500 397.900l5.700-8.400c1-1.400 1.800-3 1.800-5a7.500 7.500 0 0 0-7.500-7.500z"/></clipPath></defs><g clip-path="url(#pin)"><rect x="1870" y="370" width="32" height="32" fill="#34a853"/><path d="M1885.500 384.500L1875 378.500V374H1897V380.200z" fill="#4285f4"/><path d="M1885.500 384.500L1893.500 381.500 1897 380V374H1890z" fill="#1a73e8" opacity=".55"/><path d="M1885.500 384.500L1875 378.500V388.500z" fill="#ea4335"/><path d="M1885.500 384.500L1875 388.500 1879 391.500 1882.500 394.500 1888 386z" fill="#fbbc04"/><circle cx="1885.600" cy="384.500" r="2.400" fill="#fff"/></g></svg>
<div class="a" style="left:1873px;top:443px;width:25px;height:1px;background:#dadce0"></div>
<svg style="left:1870px;top:483px" width="32" height="32" viewBox="1870 483 32 32"><path d="M1877 498.300h17.500M1885.750 489.600v17.400" stroke="#1f1f1f" stroke-width="2.300" fill="none"/></svg>
<svg style="left:1873.500px;top:876.800px;fill:#444746" width="24" height="24" viewBox="0 0 24 24"><path d="M10 6L8.590 7.410 13.170 12l-4.580 4.590L10 18l6-6z"/></svg>
</div>
</body>
</html>
